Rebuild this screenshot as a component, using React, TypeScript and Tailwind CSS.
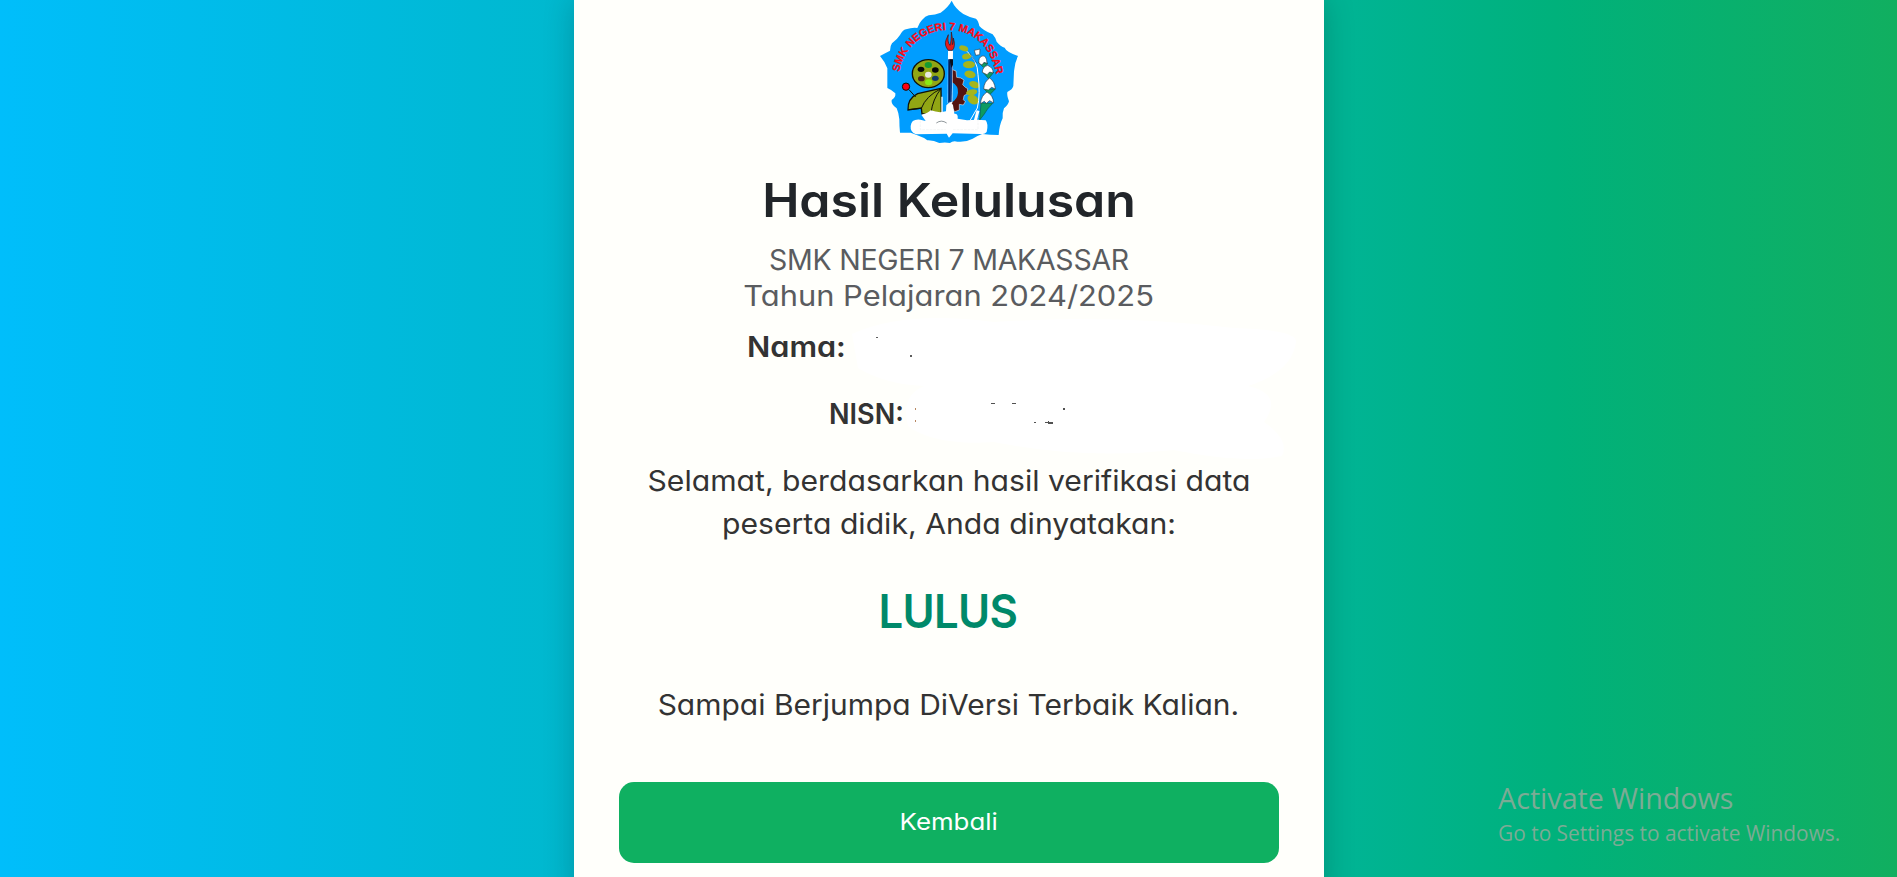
import React from "react";

function SchoolCrest() {
  return (
    <svg viewBox="0 0 480 450" className="h-[150px] w-[160px] shrink-0" role="img" aria-label="SMK Negeri 7 Makassar">
      <path
        fill="#009dff"
        d="M245 2Q256 26 280 42Q298 52 318 56Q325 62 328 78Q340 92 368 103Q376 112 380 125Q392 140 404 143Q408 155 444 168Q434 188 432 214L430 258Q428 268 412 276Q410 286 417 304Q415 314 402 325Q396 340 398 355Q388 375 386 405Q360 405 337 402Q320 408 308 416Q285 428 262 425Q248 422 240 429Q225 426 208 429Q190 420 172 421Q160 412 142 406L122 398L90 398Q88 380 88 358Q86 338 80 325Q62 312 65 300Q78 292 76 280Q66 270 52 264L52 205Q44 184 30 168Q48 158 60 152Q60 138 66 130Q82 118 90 105Q98 90 108 88Q126 82 142 84Q148 68 156 60Q166 48 176 46Q196 44 212 38Q236 20 245 2Z"
      />
      <defs>
        <path id="crest-arc" d="M88 216C100 144 160 90 234 90C312 90 368 144 380 236L384 270" />
      </defs>
      <text fill="#ff0a14" stroke="#ff0a14" strokeWidth="0.8" fontFamily="Liberation Sans, Arial, sans-serif" fontSize="32" fontWeight="700" textLength="425" lengthAdjust="spacing">
        <textPath href="#crest-arc">SMK NEGERI 7 MAKASSAR</textPath>
      </text>

      <g stroke="#101208" strokeWidth="4">
        <ellipse cx="175" cy="221" rx="48" ry="42" fill="#91a614" />
        <path d="M114 330Q112 296 143 281L213 265L214 341L156 342L154 324Z" fill="#91a614" />
        <path d="M154 325Q168 288 213 266M183 338Q188 298 213 266M115 329L154 325" fill="none" strokeWidth="3" />
        <path d="M118 270L137 291" fill="none" strokeWidth="3" />
        <circle cx="108" cy="260" r="11" fill="#ff0010" strokeWidth="3" />
      </g>
      <ellipse cx="175" cy="195" rx="11" ry="9" fill="#149b32" />
      <ellipse cx="153" cy="208" rx="10" ry="8" fill="#080808" />
      <ellipse cx="196" cy="210" rx="10" ry="8" fill="#080808" />
      <ellipse cx="154" cy="236" rx="10" ry="8" fill="#4c2619" />
      <ellipse cx="196" cy="235" rx="10" ry="8" fill="#143b68" />
      <ellipse cx="175" cy="224" rx="10" ry="9" fill="#e9e9e2" />
      <ellipse cx="176" cy="247" rx="11" ry="9" fill="#8be914" />
      <path d="M216 290V342" stroke="#fff" strokeWidth="4" />

      <path
        fill="#541410"
        stroke="#fff"
        strokeWidth="1.5"
        d="M244 208L258 213L260 232L272 234L282 240L278 254L286 262L293 266L292 281L282 287L280 299L286 305L280 315L268 313L268 330L254 335L244 319Z"
      />
      <path d="M246 246Q266 258 264 278Q262 298 246 306Z" fill="#009dff" />
      <path d="M234 152H249L247 310H233Z" fill="#fff" />
      <path d="M234 178H248L245 305L234 309Z" fill="#0b4594" />
      <path d="M238 178H249V194L244 204Z" fill="#080e1c" />
      <path d="M239 184V302" stroke="#071c46" strokeWidth="3" />
      <path d="M235 151Q222 136 228 120L235 104Q231 126 240 136Q244 126 244 96Q249 116 247 134Q252 126 250 114Q258 140 247 151Z" fill="#df1c1c" stroke="#381014" strokeWidth="2" />

      <g fill="#a5b51d">
        <ellipse cx="281" cy="145" rx="14" ry="8" transform="rotate(20 281 145)" />
        <ellipse cx="290" cy="169" rx="14" ry="9" transform="rotate(-12 290 169)" />
        <ellipse cx="297" cy="194" rx="18" ry="11" />
        <ellipse cx="300" cy="223" rx="17" ry="11" transform="rotate(12 300 223)" />
        <ellipse cx="313" cy="254" rx="16" ry="10" transform="rotate(20 313 254)" />
        <ellipse cx="305" cy="277" rx="17" ry="9" transform="rotate(-10 305 277)" />
        <ellipse cx="309" cy="299" rx="18" ry="13" transform="rotate(35 309 299)" />
      </g>
      <path d="M291 154Q323 180 324 224Q332 282 322 324L301 360" stroke="#fff" strokeWidth="3" fill="none" />
      <path d="M298 158L320 190" stroke="#0b3d76" strokeWidth="2" />
      <g fill="#0d9b62" stroke="#0b5c43" strokeWidth="2">
        <path d="M326 187L341 203L354 190Z" />
        <path d="M339 217L356 236L371 217Z" />
        <path d="M342 267L359 284L376 267Z" />
        <path d="M333 309L368 310Q350 328 343 342L329 360Z" />
      </g>
      <g fill="#fff" stroke="#333d44" strokeWidth="2">
        <path d="M313 151L330 147L329 164L317 166Z" />
        <path d="M327 190Q324 173 336 168Q350 164 351 190L342 187L336 195Z" />
        <path d="M337 217Q337 201 353 196Q371 204 369 219L359 216L351 224Z" />
        <path d="M341 267Q342 245 359 234Q374 244 376 267L365 262L355 270Z" />
        <path d="M331 311Q334 286 351 276Q370 286 371 309L359 302L349 310L343 304Z" />
      </g>
      <path d="M324 332L316 362" stroke="#fff" strokeWidth="9" />
      <path
        fill="#fff"
        d="M154 344Q175 339 182 331Q207 340 228 334L229 316Q241 301 249 315L253 341Q265 340 263 356L291 361Q320 358 347 361Q356 372 350 396Q345 404 330 402L248 400L237 413L230 401L138 403Q120 396 122 378Q124 356 151 359L167 363Z"
      />
      <path d="M199 369Q214 358 230 369" fill="none" stroke="#59636a" strokeWidth="2" />
      <path d="M151 362V389H227M249 389H324V350" fill="none" stroke="#dfe4e5" strokeWidth="1" strokeDasharray="8 3" />
    </svg>
  );
}

function ErasedArea() {
  return (
    <svg viewBox="0 0 470 170" className="pointer-events-none absolute top-[310px] left-[270px] h-[170px] w-[470px]" aria-hidden="true">
      <path
        fill="#fff"
        d="M8 24Q60 0 150 12Q270 4 390 18Q454 20 452 32Q448 62 404 76Q440 84 420 112Q446 130 438 146Q400 154 330 140Q240 150 150 132Q90 136 64 116Q56 86 80 76Q40 74 14 58Z"
      />
      <g fill="#333">
        <path d="M32 27h2v1h-2zM66 45h2v2h-2z" opacity=".8" />
        <path d="M147 93h4v1h-4zM168 93h4v1h-4zM219 98h2v2h-2zM190 112h2v1h-2zM201 112h3v-1h1v1h4v2h-5v-1h-3z" opacity=".85" />
        <path d="M71 98h1v2h-1zM71 110h1v2h-1z" fill="#b88761" />
      </g>
    </svg>
  );
}

export default function App() {
  return (
    <div className="relative flex h-[877px] w-full justify-center overflow-hidden bg-[linear-gradient(to_right,#00befb_0%,#00b9d5_25%,#00b494_71%,#00b17b_82%,#11af60_100%)] font-[Inter,sans-serif] [font-feature-settings:'cv11']">
      <main className="relative ml-px flex h-[900px] w-[750px] shrink-0 flex-col items-center bg-[#fffffb] px-[45px] text-[28.5px] leading-[43px] whitespace-nowrap text-[#333] shadow-[0_0_30px_rgba(0,0,0,0.2)]">
        <div className="flex h-[171px] pl-[2px]">
          <SchoolCrest />
        </div>
        <h1 className="scale-x-[1.074] text-[46.5px] leading-[58px] font-semibold text-[#212529]">Hasil Kelulusan</h1>
        <div className="mt-[13px] text-center leading-[36px] text-[#5a5c5f]">
          <p className="tracking-[-0.25px]">SMK NEGERI 7 MAKASSAR</p>
          <p className="scale-x-[1.083]">Tahun Pelajaran 2024/2025</p>
        </div>
        <div className="mt-[11px] flex w-full flex-col items-start gap-6 font-semibold">
          <p className="ml-[128px] origin-left scale-x-[1.075]">Nama:</p>
          <p className="ml-[210px] origin-left scale-x-[0.95]">NISN:</p>
        </div>
        <div className="mt-6 text-center">
          <p className="scale-x-[1.058]">Selamat, berdasarkan hasil verifikasi data</p>
          <p className="scale-x-[1.058]">peserta didik, Anda dinyatakan:</p>
        </div>
        <p className="mt-[37px] mr-[2px] scale-x-[0.94] text-[46.5px] leading-[58px] font-semibold tracking-[-0.7px] text-[#00896a]">LULUS</p>
        <p className="mt-[43px] mr-[1px] scale-x-[1.052]">Sampai Berjumpa DiVersi Terbaik Kalian.</p>
        <button className="mt-[56px] h-[81px] w-full shrink-0 rounded-[15px] bg-[#0fb061] pb-[2px] text-[23.5px] leading-[36px] text-white">
          <span className="inline-block scale-x-[1.1]">Kembali</span>
        </button>
        <ErasedArea />
      </main>
      <aside className="absolute top-[779px] left-[1498px] font-['Open_Sans',sans-serif] whitespace-nowrap text-[#7cab95]">
        <p className="text-[28.7px] leading-[38px]">Activate Windows</p>
        <p className="text-[20.9px] leading-[33px]">Go to Settings to activate Windows.</p>
      </aside>
    </div>
  );
}
